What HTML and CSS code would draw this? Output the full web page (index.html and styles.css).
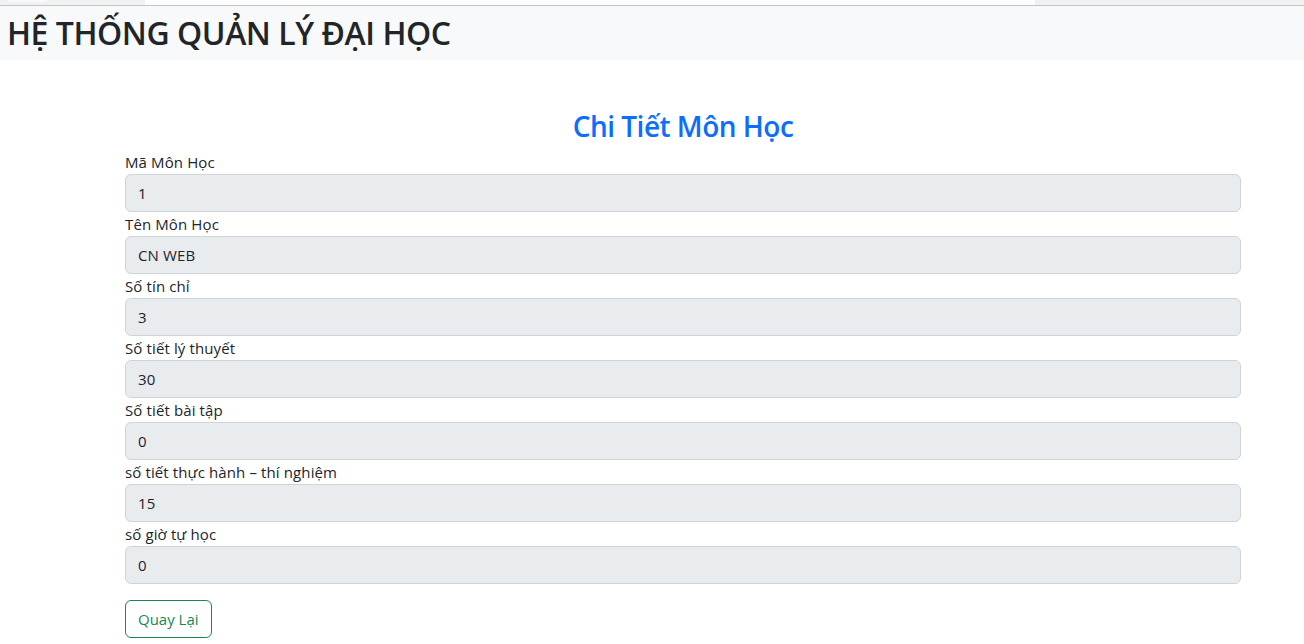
FILE: index.html
```html
<!DOCTYPE html>
<html lang="vi">
<head>
<meta charset="utf-8">
<title>Chi Tiết Môn Học</title>
<link rel="stylesheet" href="styles.css">
</head>
<body>
<div class="topstrip"><span class="strip-pad"></span><span class="strip-mini"></span><span class="strip-gap"></span><span class="strip-tab"></span></div>
<nav class="navbar"><h2 class="brand">HỆ THỐNG QUẢN LÝ ĐẠI HỌC</h2></nav>
<main class="content">
  <h3 class="title">Chi Tiết Môn Học</h3>
  <form class="detail">
    <label class="lbl">Mã Môn Học</label>
    <input class="field" value="1" disabled>
    <label class="lbl">Tên Môn Học</label>
    <input class="field" value="CN WEB" disabled>
    <label class="lbl">Số tín chỉ</label>
    <input class="field" value="3" disabled>
    <label class="lbl">Số tiết lý thuyết</label>
    <input class="field" value="30" disabled>
    <label class="lbl">Số tiết bài tập</label>
    <input class="field" value="0" disabled>
    <label class="lbl">số tiết thực hành – thí nghiệm</label>
    <input class="field" value="15" disabled>
    <label class="lbl">số giờ tự học</label>
    <input class="field" value="0" disabled>
    <div class="actions"><a class="btn-back" href="#">Quay Lại</a></div>
  </form>
</main>
</body>
</html>
```
FILE: styles.css
```css
* { box-sizing: border-box; }
html, body { margin: 0; padding: 0; }
body {
  font-family: "Open Sans", "Noto Sans", sans-serif;
  font-size: 16px;
  line-height: 1.5;
  color: #212529;
  background: #fff;
}
.topstrip {
  height: 6px;
  display: flex;
  background: #f1f1f1;
  border-bottom: 1px solid #c4c4c4;
}
.strip-pad { width: 8px; }
.strip-mini { width: 39px; height: 2px; background: #f8f8f8; }
.strip-gap { width: 98px; }
.strip-tab { width: 890px; background: #fff; }
.navbar {
  background: #f8f9fa;
  padding: 8px 7px;
}
.brand {
  margin: 0;
  font-size: 32px;
  font-weight: 600;
  line-height: 1.2;
  letter-spacing: -0.45px;
}
.content {
  width: 1116px;
  margin-left: 125px;
}
.title {
  margin: 50px 0 6px;
  text-align: center;
  color: #0d6efd;
  font-size: 28px;
  font-weight: 600;
  line-height: 1.2;
  letter-spacing: -0.5px;
}
.detail { display: flex; flex-direction: column; }
.lbl { display: block; font-size: 15px; letter-spacing: 0.12px; line-height: 24px; }
.field {
  display: block;
  width: 100%;
  height: 38px;
  padding: 6px 12px;
  font: inherit;
  font-size: 15px;
  letter-spacing: 0.12px;
  color: #212529;
  background: #e9ecef;
  border: 1px solid #ced4da;
  border-radius: 6px;
  opacity: 1;
}
.actions { margin-top: 16px; display: flex; }
.btn-back {
  display: inline-block;
  height: 38px;
  padding: 6px 12px;
  font-size: 15px;
  line-height: 24px;
  color: #198754;
  border: 1px solid #198754;
  border-radius: 6px;
  text-decoration: none;
}
```
